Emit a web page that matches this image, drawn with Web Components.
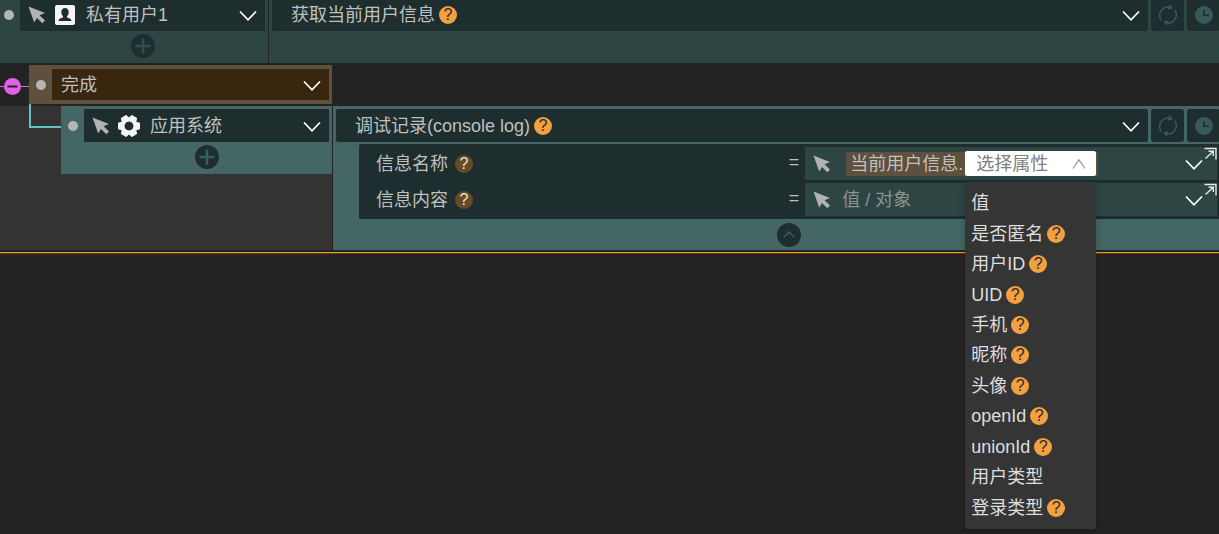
<!DOCTYPE html>
<html lang="zh-CN">
<head>
<meta charset="utf-8">
<title>事件编辑器</title>
<style>
html { background: #232323; }
body {
  margin: 0;
  min-height: 100vh;
  color: #bfc0bf;
  font: 18px/24px "Liberation Sans", "Noto Sans CJK SC", sans-serif;
  overflow: hidden;
}
</style>
</head>
<body>
<event-editor></event-editor>

<script>
const define = (name, html, setup) => {
  const template = document.createElement('template');
  template.innerHTML = html;
  customElements.define(name, class extends HTMLElement {
    connectedCallback() {
      if (this.shadowRoot) return;
      const content = template.content.cloneNode(true);
      if (setup) setup(this, content);
      this.attachShadow({ mode: 'open' }).append(content);
    }
  });
};

/* Icon set: each entry is [width, height, viewBox, markup]. */
const teeth = [0, 60, 120, 180, 240, 300]
  .map(a => `<path d="M-4.600 -6 L-3.400 -10.200 Q-3.200 -11 -2.400 -11 L2.400 -11 Q3.200 -11 3.400 -10.200 L4.600 -6Z" transform="rotate(${a + 30})"/>`).join('');
const ICONS = {
  cursor: [18, 18, '0 0 18 18', '<path fill="#b2b2b2" d="M.5 .5 17 7 11.6 9.2 17 14.4 14.3 17.2 9 12 6.2 16.6Z"/>'],
  user: [20, 20, '0 0 20 20', '<rect width="20" height="20" rx="2" fill="#f4f4f4"/><path fill="#1e2e2e" d="M10 3c2.300 0 3.700 1.700 3.700 4 0 1.800-.7 3.400-1.700 4.200v1.300c2.500.7 4.500 1.500 4.500 3.500H3.500c0-2 2-2.800 4.500-3.500v-1.300C7 10.400 6.300 8.800 6.300 7 6.300 4.700 7.700 3 10 3z"/>'],
  gear: [22, 22, '-11 -11 22 22', `<g fill="#f4f4f4">${teeth}</g><circle r="6.400" fill="none" stroke="#f4f4f4" stroke-width="4.200"/><circle r="4.300" fill="#1e2e2e"/>`],
  down: [18, 12, '0 0 18 12', '<path d="M1 1.500 9 9.800 17 1.500" fill="none" stroke="#fff" stroke-width="1.700"/>'],
  up: [14, 12, '0 0 14 12', '<path d="M1 10.500 7 2 13 10.500" fill="none" stroke="#999" stroke-width="1.300"/>'],
  plus: [24, 24, '0 0 24 24', '<circle cx="12" cy="12" r="12" fill="#1e2e2e"/><path d="M12 4.500v15M4.500 12h15" stroke="var(--mark, #2f4f4c)" stroke-width="2.400"/>'],
  fold: [24, 24, '0 0 24 24', '<circle cx="12" cy="12" r="12" fill="#1e2e2e"/><path d="M6.500 14.500 12 9l5.500 5.500" fill="none" stroke="#385a58" stroke-width="1.700"/>'],
  minus: [17, 17, '0 0 17 17', '<circle cx="8.500" cy="8.500" r="8.500" fill="#dd62e6"/><path d="M3.500 8.500h10" stroke="#2a1a2c" stroke-width="2"/>'],
  refresh: [20, 22, '0 0 20 22', '<g fill="none" stroke="#36595a" stroke-width="1.500"><path d="M3.200 16.400A8.600 8.600 0 0 1 10.500 2.900"/><path d="M16.800 5.700A8.600 8.600 0 0 1 9.500 19.200"/></g><path fill="#36595a" d="M11 .3 15 4.300 9.600 5.700ZM9 21.800 5 17.600 10.400 16.400Z"/>'],
  clock: [18, 18, '0 0 18 18', '<circle cx="9" cy="9" r="9" fill="#36595a"/><path d="M9 4v5.200h5" fill="none" stroke="#1e2e2e" stroke-width="1.600"/>'],
  popout: [13, 13, '0 0 13 13', '<path d="M.5 1.500h11.500v11M1.500 11.500 9 4.500M4.500 4.200h4.800v4.800" fill="none" stroke="#e6e6e6" stroke-width="1.400"/>'],
};
define('ui-icon', `<style>:host{display:block;flex:none}svg{display:block}</style>`, (host, content) => {
  const [w, h, box, body] = ICONS[host.getAttribute('name')];
  const holder = document.createElement('template');
  holder.innerHTML = `<svg width="${w}" height="${h}" viewBox="${box}" aria-hidden="true">${body}</svg>`;
  content.append(holder.content);
});

define('help-tip', `<style>
:host{display:block;flex:none;--disc:#f2a040;--ink:#2a2a2a}
:host([muted]){--disc:#664b24;--ink:#e8e2d8}
button{display:block;width:18px;height:18px;padding:0;border:0;border-radius:50%;background:var(--disc);color:var(--ink);font:16px/18px "Liberation Sans",sans-serif;text-align:center}
</style><button type="button" aria-label="帮助">?</button>`);

/* Drop-down whose text, extras and arrow share one box. */
define('pick-box', `<style>
:host{display:flex;align-items:center;min-width:0;height:33px;background:#1e2e2e;box-sizing:border-box;padding-right:8px}
:host([tone=event]){height:39px;background:#38260e;border:4px solid #5f503d;border-left:0;border-right-width:3px;}
:host([rounded]){border-radius:2px}
select{appearance:none;field-sizing:content;background:none;border:0;padding:0;margin:0;color:inherit;font:inherit;outline:0}
.gap{flex:1}
ui-icon{margin-top:3px}
</style><slot name="lead"></slot><select></select><slot></slot><span class="gap"></span><ui-icon name="down"></ui-icon>`,
(host, content) => {
  const select = content.querySelector('select');
  select.setAttribute('aria-label', host.getAttribute('label'));
  select.append(new Option(host.getAttribute('value')));
});

/* Object card: grip dot, object picker and an add button. */
define('object-card', `<style>
:host{display:grid;grid-template-columns:23px 1fr;row-gap:3px;box-sizing:border-box;flex:none;width:271px;height:68px;padding:3px 3px 5px 0;background:var(--panel)}
.dot{width:10px;height:10px;border-radius:50%;background:#b5b5b5;place-self:center}
pick-box ui-icon[name=cursor]{margin:0 0 0 8px}
.pic{display:grid;place-items:center;width:22px;margin:0 10px 0 8px}
.add{grid-column:2;justify-self:center;padding:0;border:0;background:none;height:24px}
</style><span class="dot"></span>
<pick-box><ui-icon slot="lead" name="cursor"></ui-icon><span class="pic" slot="lead"></span></pick-box>
<button class="add" type="button" aria-label="添加动作"><ui-icon name="plus"></ui-icon></button>`,
(host, content) => {
  const icon = document.createElement('ui-icon');
  icon.setAttribute('name', host.getAttribute('icon'));
  content.querySelector('.pic').append(icon);
  const box = content.querySelector('pick-box');
  box.setAttribute('label', '对象');
  box.setAttribute('value', host.getAttribute('value'));
});

/* Action cell: action picker, loop and delay buttons, parameters below. */
define('action-cell', `<style>
:host{display:block;flex:1;min-width:0;box-sizing:border-box;padding:3px 0 3px 3px;background:var(--panel)}
.bar{display:grid;grid-template-columns:1fr 33px 33px;column-gap:3px;margin-right:-1px}
pick-box{padding-left:19px}
help-tip{margin-left:4px}
button{display:grid;place-items:center;height:33px;padding:0;border:0;border-radius:3px;background:#1e2e2e}
</style><div class="bar"><pick-box rounded label="动作"><help-tip></help-tip></pick-box>
<button class="tool" type="button" aria-label="循环"><ui-icon name="refresh"></ui-icon></button>
<button class="tool" type="button" aria-label="延时"><ui-icon name="clock"></ui-icon></button></div><slot></slot>`,
(host, content) => content.querySelector('pick-box').setAttribute('value', host.getAttribute('value')));

define('param-list', `<style>
:host{display:block;margin:2px 0 0 23px}
.rows{display:grid;gap:3px;padding:3px 2px 3px 0;background:#1e2e2e;border-radius:2px 0 0 2px}
button{display:block;margin:4px auto 0;padding:0;border:0;background:none}
</style><div class="rows"><slot></slot></div><button type="button" aria-label="收起"><ui-icon name="fold"></ui-icon></button>`);

define('param-row', `<style>
:host{display:grid;grid-template-columns:13fr 12fr;height:33px}
.name{display:flex;align-items:center;padding:0 6px 0 17px}
help-tip{margin-left:7px}
.eq{margin-left:auto;padding-bottom:4px}
.field{position:relative;display:flex;align-items:center;padding:0 14px 0 8px;background:#2d4543;min-width:0}
.body{flex:1;min-width:0}
.pop{position:absolute;top:0;right:0}
.arrow{margin-top:3px}
</style><div class="name"><span class="label"></span><help-tip muted></help-tip><span class="eq">=</span></div>
<div class="field"><ui-icon name="cursor"></ui-icon><div class="body"><slot></slot></div><ui-icon class="arrow" name="down"></ui-icon><ui-icon class="pop" name="popout"></ui-icon></div>`,
(host, content) => { content.querySelector('.label').textContent = host.getAttribute('label'); });

define('value-input', `<style>
:host{display:block;margin-left:11px}
input{display:block;width:100%;box-sizing:border-box;padding:0;border:0;outline:0;background:none;color:inherit;font:inherit}
input::placeholder{color:#8c9391;opacity:1}
</style><input type="text" placeholder="值 / 对象" aria-label="信息内容">`);

/* Reference chip with the property drop-down open under it. */
define('property-chip', `<style>
:host{display:flex;align-items:center;gap:2px;width:max-content;height:24px;box-sizing:border-box;margin-left:15px;padding:0 2px 0 4px;border-radius:3px;background:#5f503d}
.combo{position:relative;width:131px}
.trigger{display:flex;align-items:center;justify-content:space-between;width:100%;height:25px;padding:0 10px 0 11px;border:0;border-radius:2px;background:#fff;color:#808080;font:inherit}
ul{position:absolute;z-index:2;top:31px;left:0;right:0;height:347px;box-sizing:border-box;display:grid;grid-auto-rows:1fr;margin:0;padding:6px;list-style:none;border-radius:3px;background:#353535;color:#dedede;box-shadow:0 2px 8px #0003}
li{display:flex;align-items:center;white-space:nowrap}
help-tip{margin-left:4px}
</style><span>当前用户信息.</span><div class="combo">
<button class="trigger" type="button" aria-haspopup="listbox" aria-expanded="true" aria-controls="list"><span>选择属性</span><ui-icon name="up"></ui-icon></button>
<ul id="list" role="listbox" aria-label="选择属性">
<li role="option">值</li>
<li role="option">是否匿名<help-tip></help-tip></li>
<li role="option">用户ID<help-tip></help-tip></li>
<li role="option">UID<help-tip></help-tip></li>
<li role="option">手机<help-tip></help-tip></li>
<li role="option">昵称<help-tip></help-tip></li>
<li role="option">头像<help-tip></help-tip></li>
<li role="option">openId<help-tip></help-tip></li>
<li role="option">unionId<help-tip></help-tip></li>
<li role="option">用户类型</li>
<li role="option">登录类型<help-tip></help-tip></li>
</ul></div>`);

/* Callback event with its fold handle on the branch line. */
define('event-row', `<style>
:host{display:flex;align-items:center;padding:2px 0}
.branch{position:relative;width:29px;height:1px;background:#dd62e6;margin-top:4px}
.branch button{position:absolute;left:4px;top:-8px;padding:0;border:0;background:none;height:17px}
.card{display:grid;grid-template-columns:23px 1fr;width:303px;background:#5f503d}
.dot{width:10px;height:10px;border-radius:50%;background:#b5b5b5;place-self:center}
pick-box{padding-left:9px}
</style><div class="branch"><button type="button" aria-label="折叠"><ui-icon name="minus"></ui-icon></button></div>
<div class="card"><span class="dot"></span><pick-box tone="event" label="事件" value="完成"></pick-box></div>`);

define('event-editor', `<style>
:host{display:block}
.row{display:flex;gap:1px}
.scrolled{margin:-5px 0 0 -3px;--panel:#2d4543}
.child{position:relative;--panel:#446765;--mark:#35605d;border-bottom:1px solid #232323}
.child::before{content:"";position:absolute;left:29px;top:-2px;width:30px;height:22px;border-style:solid;border-color:#5fc4c4;border-width:0 0 2px 2px}
.side{background:#333;padding-left:61px}
.end{height:1px;margin-top:1px;background:#f09a1c;border-bottom:1px solid #5c3f16}
</style>
<div class="row scrolled"><object-card icon="user" value="私有用户1"></object-card><action-cell value="获取当前用户信息"></action-cell></div>
<event-row></event-row>
<div class="row child"><div class="side"><object-card icon="gear" value="应用系统"></object-card></div>
<action-cell value="调试记录(console log)"><param-list>
<param-row label="信息名称"><property-chip></property-chip></param-row>
<param-row label="信息内容"><value-input></value-input></param-row>
</param-list></action-cell></div>
<div class="end"></div>`);
</script>
</body>
</html>
